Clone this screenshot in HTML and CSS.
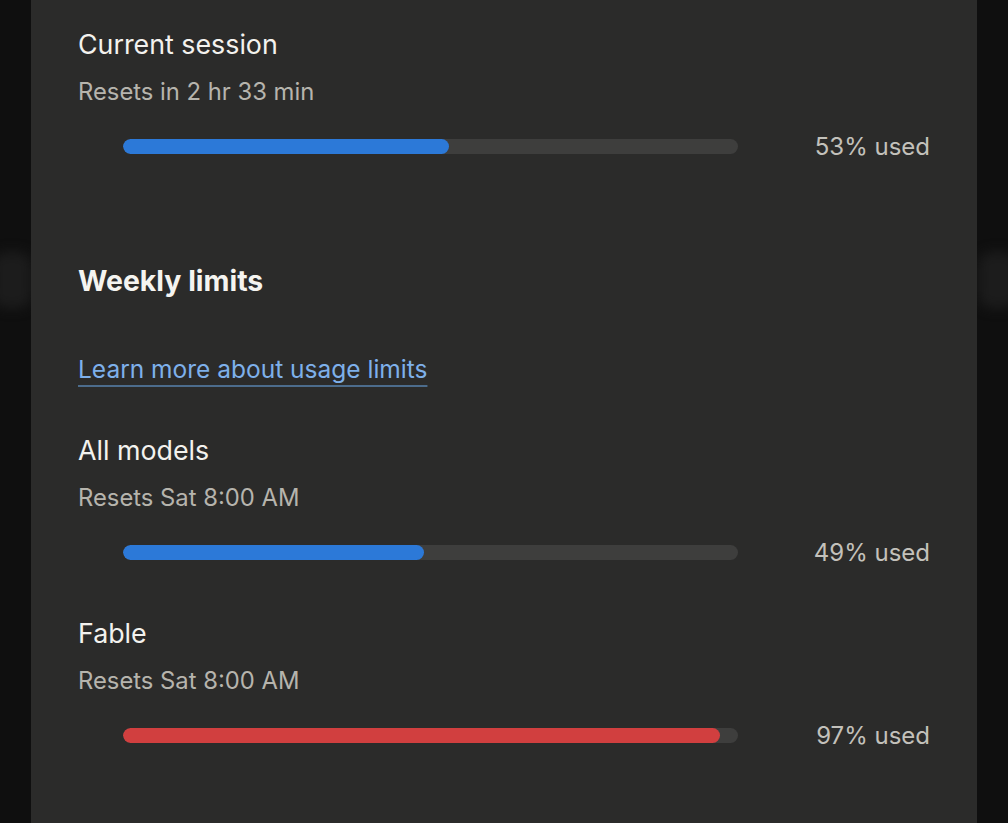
FILE: index.html
```html
<!DOCTYPE html>
<html lang="en">
<head>
    <meta charset="UTF-8">
    <meta name="viewport" content="width=device-width, initial-scale=1.0">
    <title>Usage</title>
    <link rel="stylesheet" href="styles.css">
</head>

<body>

<div class="backdrop backdrop-left"></div>
<div class="backdrop backdrop-right"></div>

<div class="panel">

    <div class="item first">
        <div class="item-title">Current session</div>
        <div class="item-sub">Resets in 2 hr 33 min</div>
        <div class="usage-row">
            <div class="bar"><div class="fill" style="width:53%"></div></div>
            <div class="pct">53% used</div>
        </div>
    </div>

    <h2 class="section-title">Weekly limits</h2>

    <a class="more-link" href="#">Learn more about usage limits</a>

    <div class="item">
        <div class="item-title">All models</div>
        <div class="item-sub">Resets Sat 8:00 AM</div>
        <div class="usage-row">
            <div class="bar"><div class="fill" style="width:49%"></div></div>
            <div class="pct">49% used</div>
        </div>
    </div>

    <div class="item">
        <div class="item-title">Fable</div>
        <div class="item-sub">Resets Sat 8:00 AM</div>
        <div class="usage-row">
            <div class="bar"><div class="fill danger" style="width:97%"></div></div>
            <div class="pct">97% used</div>
        </div>
    </div>

</div>

</body>
</html>
```

FILE: styles.css
```css
html, body {
    margin: 0;
    height: 100%;
}
body {
    background-color: #0f0f0f;
    font-family: Inter, "Liberation Sans", sans-serif;
    overflow: hidden;
    position: relative;
}

/* blurred page behind the sheet */
.backdrop {
    position: absolute;
    top: 252px;
    width: 40px;
    height: 56px;
    background-color: #1c1c1c;
    border-radius: 14px;
    filter: blur(6px);
}
.backdrop-left {
    left: -8px;
}
.backdrop-right {
    right: -10px;
}

.panel {
    position: relative;
    margin: 0 31px;
    height: 100%;
    background-color: #2b2b2a;
    padding: 26px 47px 0 47px;
    box-sizing: border-box;
}

.item {
    margin-top: 45px;
}
.item.first {
    margin-top: 0;
}
.item-title {
    font-size: 26.8px;
    line-height: 36px;
    color: #f3f2ee;
}
.item-sub {
    margin-top: 12px;
    font-size: 23.8px;
    line-height: 36px;
    color: #b6b4ad;
}

.usage-row {
    display: flex;
    align-items: center;
    margin-top: 18px;
    height: 36px;
}
.bar {
    flex: 1;
    margin-left: 45px;
    height: 15px;
    border-radius: 8px;
    background-color: #3e3e3d;
    overflow: hidden;
}
.fill {
    height: 100%;
    border-radius: 8px;
    background-color: #2c79d8;
}
.fill.danger {
    background-color: #d13f3f;
}
.pct {
    flex: 0 0 192px;
    text-align: right;
    font-size: 24px;
    color: #c3c1bb;
}

.section-title {
    margin: 99px 0 0 0;
    font-size: 28.4px;
    line-height: 36px;
    font-weight: 700;
    color: #f5f4f0;
}

.more-link {
    display: inline-block;
    margin-top: 52px;
    font-size: 24.5px;
    line-height: 36px;
    color: #7eb0ea;
    text-decoration: underline;
    text-decoration-color: #4c6c8c;
    text-decoration-thickness: 2px;
    text-underline-offset: 7px;
}
```
